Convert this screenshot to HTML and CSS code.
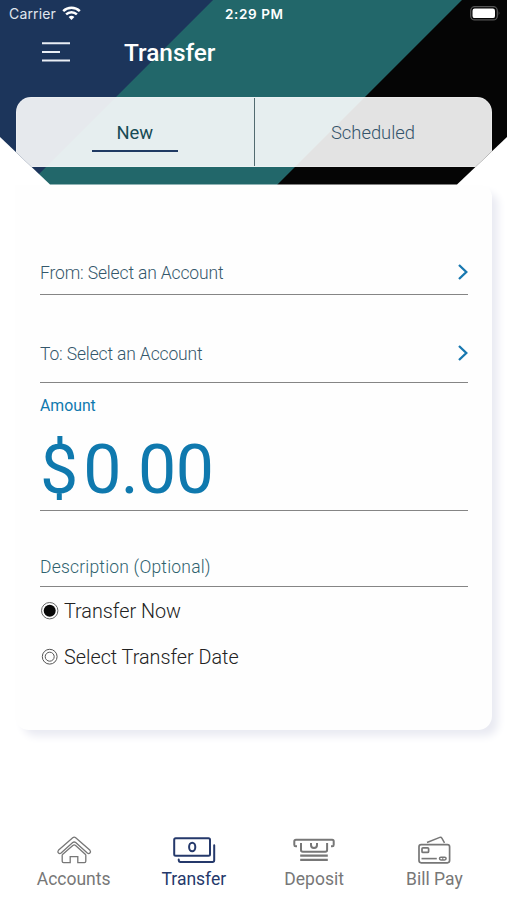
FILE: index.html
```html
<!DOCTYPE html>
<html lang="en">
<head>
<meta charset="utf-8">
<title>Transfer</title>
<link rel="stylesheet" href="styles.css">
</head>
<body>
<div class="app">
  <header class="header">
    <div class="status">
      <span class="carrier">Carrier
        <svg width="19" height="15" viewBox="0 0 19 15" fill="none" stroke="#fff" stroke-width="2.5"><path d="M1.2 5.1a12 12 0 0 1 16.6 0M4.1 8.4a7.8 7.8 0 0 1 10.8 0"/><path d="M6.6 11a4.3 4.3 0 0 1 5.8 0l-2.9 3z" fill="#fff" stroke="none"/></svg>
      </span>
      <span class="time">2:29 PM</span>
      <svg class="battery" width="31" height="15" viewBox="0 0 31 15"><rect x=".7" y=".7" width="26.6" height="13.2" rx="4" fill="none" stroke="#555" stroke-width="1.3"/><rect x="2.5" y="2.5" width="22.5" height="9.6" rx="2.2" fill="#fff"/><path d="M28.7 5q1.8 2.3 0 4.6z" fill="#555"/></svg>
    </div>
    <div class="titlebar">
      <svg class="menu" width="28" height="20" viewBox="0 0 28 20" stroke="#e9eef5" stroke-width="2"><path d="M0 1.3h28M0 10h18M0 18.4h28"/></svg>
      <h1>Transfer</h1>
    </div>
    <nav class="tabs">
      <div class="tab active"><span>New</span></div>
      <div class="tab"><span>Scheduled</span></div>
    </nav>
  </header>

  <main class="card">
    <div class="field from"><span>From: Select an Account</span>
      <svg width="10" height="16" viewBox="0 0 10 16"><path d="M1 1l7.3 7L1 15"/></svg></div>
    <div class="field to"><span>To: Select an Account</span>
      <svg width="10" height="16" viewBox="0 0 10 16"><path d="M1 1l7.3 7L1 15"/></svg></div>
    <div class="amount">
      <label>Amount</label>
      <div class="value"><span class="currency">$</span><span>0.00</span></div>
    </div>
    <div class="field description"><span>Description (Optional)</span></div>
    <div class="option"><svg width="20" height="20" viewBox="0 0 20 20" fill="none" stroke="#666"><circle cx="9.7" cy="9.7" r="8.2"/><circle cx="9.7" cy="9.7" r="6" fill="#080808" stroke="none"/></svg><span>Transfer Now</span></div>
    <div class="option date"><svg width="20" height="20" viewBox="0 0 20 20" fill="none" stroke="#555"><circle cx="9.7" cy="9.7" r="7.4"/><circle cx="9.7" cy="9.7" r="4.5"/></svg><span>Select Transfer Date</span></div>
  </main>

  <nav class="bottom">
    <div class="item">
      <svg width="50" height="34" viewBox="0 0 50 34"><path d="M9.4 17.3 23.7 4.7q1.5-1.2 3 0L41 17.3q1.2 1.5-.1 2.8-1.2 1.1-2.6 0L26.7 9.6q-1.5-1.2-3 0L12.1 20.1q-1.4 1.1-2.6 0-1.3-1.3-.1-2.8z" stroke-width="1.3"/><path d="M13.2 21.8v6.5q0 1.4 1.4 1.4h6.6v-6h7.6v6h6.6q1.4 0 1.4-1.4v-6.5M13.2 21.8l10.6-9.4q1.4-1.1 2.8 0l10.2 9.4" stroke-width="1.3"/></svg>
      <span>Accounts</span>
    </div>
    <div class="item current">
      <svg width="50" height="34" viewBox="0 0 50 34"><rect x="5.2" y="5.2" width="35.8" height="17.6" rx="1.5" stroke-width="2"/><ellipse cx="23.2" cy="14" rx="3.1" ry="4.3" stroke-width="2"/><path d="M45.2 12.2v15q0 1.7-1.7 1.7h-32q-1.8 0-1.8-2.5" stroke-width="2" stroke-linecap="round"/></svg>
      <span>Transfer</span>
    </div>
    <div class="item">
      <svg width="50" height="34" viewBox="0 0 50 34"><path d="M8 13.3H6.7q-1.4 0-1.4-1.5V8.2Q5.3 6.7 7 6.7h36.2q1.5 0 1.5 1.5v3.6q0 1.5-1.4 1.5H42M12 10v7.1q0 1.7 1.8 1.7h22.5q1.8 0 1.8-1.7V10" stroke-width="2"/><path d="M22 10v1.9q0 2.8 3 3.1 3-.3 3-3.1V10" stroke-width="2"/><path d="M11.2 22.6h27.6M11.2 26.9h27.6" stroke-width="2.3"/></svg>
      <span>Deposit</span>
    </div>
    <div class="item">
      <svg width="50" height="34" viewBox="0 0 50 34"><rect x="10" y="11.6" width="30.6" height="18.2" rx="2.2" stroke-width="1.7"/><path d="m18 9.5 12.8-5.1q1.4-.4 2.2.9l2.5 4.5" stroke-width="1.5"/><rect x="13" y="14.8" width="6.6" height="4.6" rx="1" stroke-width="1.7"/><path d="M12.5 25.6h15.3" stroke-width="1.6"/><rect x="30.5" y="24.2" width="6.6" height="2.8" rx="1.4" stroke-width="1.5"/><path d="M33.8 24v3"/></svg>
      <span>Bill Pay</span>
    </div>
  </nav>
</div>
</body>
</html>
```
FILE: styles.css
```css
* { box-sizing: border-box; }
body { margin: 0; background: #fff; font-family: Roboto, "Liberation Sans", sans-serif; }
.app { width: 507px; height: 900px; display: flex; flex-direction: column; overflow: hidden; }

.header {
  height: 184.5px; flex: none;
  background: linear-gradient(135deg, #1c355b 150.3px, #22676a 151px 326.3px, #050505 327px);
  clip-path: polygon(0 0, 100% 0, 100% 137px, 457px 100%, 50px 100%, 0 137px);
}
.status { height: 28px; padding: 0 8px 0 9px; display: grid; grid-template-columns: 1fr auto 1fr; align-items: center; color: #fff; }
.carrier { display: flex; align-items: center; gap: 6px; font: 14px/17px Inter, sans-serif; letter-spacing: .15px; color: #e0e6ee; margin-top: -1px; }
.carrier svg { margin-top: -1px; }
.time { font: 600 13.5px/17px Inter, sans-serif; letter-spacing: .6px; margin-right: -.5px; }
.battery { justify-self: end; margin-right: -2px; margin-top: -1px; }
.titlebar { height: 69px; padding-left: 42px; display: flex; align-items: flex-start; }
.menu { margin-top: 14px; margin-right: 54px; }
h1 { margin: 10px 0 0; font-size: 24.4px; line-height: 30px; font-weight: 500; color: #fff; }

.tabs { margin: 0 15px 0 15.5px; height: 70px; display: flex; overflow: hidden; border-radius: 15px 15px 0 0; background: rgba(255, 255, 255, .89); border: 1px solid rgba(255, 255, 255, .25); }
.tab { flex: 1; display: flex; justify-content: center; align-items: flex-start; padding-top: 23px; font-size: 18.4px; line-height: 24px; font-weight: 300; color: #34546b; }
.tab.active { flex: none; width: 238.5px; border-right: 1px solid #526b70; padding-right: 1px; font-weight: 450; color: #174b55; }
.tab.active span { width: 86px; height: 31px; text-align: center; border-bottom: 2px solid #203a63; }

.card { flex: none; width: 477px; height: 545px; margin-left: 15px; padding: 60px 24px 0 25px; background: #fefefe; border-radius: 0 12px 14px 14px; box-shadow: 7px 7px 8px -1px #e9eaf2; }
.field { display: flex; justify-content: space-between; border-bottom: 1.5px solid #858585; font-size: 17.5px; line-height: 24px; font-weight: 300; letter-spacing: -.15px; color: #34576b; }
.field svg { margin-top: 3.5px; fill: none; stroke: #1878b0; stroke-width: 2.3; }
.from { height: 50px; padding-top: 16px; }
.to { height: 88px; padding-top: 47px; }
.amount { height: 128px; border-bottom: 1.5px solid #858585; color: #0f79ae; }
.amount label { display: block; padding-top: 12px; font-size: 15.8px; line-height: 22px; }
.value { display: flex; margin-top: 13px; font-size: 68px; line-height: 80px; letter-spacing: -.6px; }
.currency { margin-right: 5.5px; }
.description { height: 76px; padding-top: 44px; color: #2f626e; letter-spacing: .2px; }
.option { display: flex; align-items: center; height: 24px; margin-top: 12px; font-size: 19.8px; font-weight: 300; color: #222; }
.option svg { margin-right: 4px; }
.option span { padding-top: 2px; }
.date { margin-top: 22px; }

.bottom { margin-top: auto; height: 67px; padding: 0 13px; display: flex; }
.item { flex: 1; display: flex; flex-direction: column; align-items: center; font-size: 17.5px; line-height: 24px; color: #777; }
.item svg { fill: none; stroke: currentColor; margin-left: 1px; }
.item span { margin-left: 1px; margin-top: -.5px; }
.current { color: #25396b; }
```
